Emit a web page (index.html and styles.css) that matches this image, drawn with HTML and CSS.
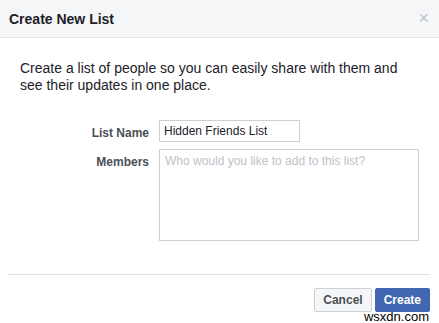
FILE: index.html
```html
<!DOCTYPE html>
<html lang="en">
<head>
  <meta charset="UTF-8">
  <title>Create New List</title>
  <link rel="stylesheet" href="styles.css">
</head>
<body>
  <div class="dialog">
    <div class="dialog-header">
      <h2>Create New List</h2>
      <span class="close">&times;</span>
    </div>

    <div class="dialog-body">
      <p class="intro">Create a list of people so you can easily share with them and see their updates in one place.</p>

      <div class="form">
        <label for="listName">List Name</label>
        <input id="listName" type="text" value="Hidden Friends List">
        <label for="members">Members</label>
        <textarea id="members" placeholder="Who would you like to add to this list?"></textarea>
      </div>
    </div>

    <div class="dialog-footer">
      <button class="btn">Cancel</button>
      <button class="btn btn-primary">Create</button>
    </div>

    <span class="watermark">wsxdn.com</span>
  </div>
</body>
</html>
```

FILE: styles.css
```css
body {
  margin: 0;
  background: #fff;
  font-family: "Liberation Sans", Arial, sans-serif;
  color: #1d2129;
}

.dialog {
  position: relative;
  width: 439px;
  height: 323px;
  box-sizing: border-box;
}

.dialog-header {
  height: 37px;
  background: #f5f6f7;
  border-bottom: 1px solid #e5e5e5;
  padding: 0 10px 0 9px;
  display: flex;
  align-items: center;
  justify-content: space-between;
}
.dialog-header h2 {
  margin: 0;
  font-size: 14px;
  font-weight: bold;
  color: #1d2129;
}
.close {
  font-size: 18px;
  line-height: 1;
  color: #bec2c9;
  margin-top: -1px;
}

.dialog-body {
  padding: 22px 20px 0 20px;
}
.intro {
  margin: 0;
  font-size: 14px;
  line-height: 17px;
  width: 380px;
}

.form {
  margin-top: 26px;
  display: grid;
  grid-template-columns: 129px 260px;
  column-gap: 10px;
  row-gap: 7px;
}
.form label {
  text-align: right;
  font-size: 12px;
  font-weight: bold;
  color: #4b4f56;
  padding-top: 6px;
}
.form input,
.form textarea {
  font-family: inherit;
  font-size: 12px;
  color: #1d2129;
  border: 1px solid #ccd0d5;
  box-sizing: border-box;
  margin: 0;
  padding: 3px 4px;
  outline: none;
}
.form input {
  width: 141px;
  height: 22px;
}
.form textarea {
  width: 260px;
  height: 92px;
  resize: none;
  padding: 4px 5px;
}
.form textarea::placeholder {
  color: #bec2c9;
}

.dialog-footer {
  margin: 33px 9px 0 8px;
  border-top: 1px solid #dddfe2;
  padding-top: 13px;
  display: flex;
  justify-content: flex-end;
  gap: 3px;
}
.btn {
  font-family: inherit;
  font-size: 12px;
  font-weight: bold;
  height: 24px;
  padding: 0 8px;
  border: 1px solid #ccd0d5;
  border-radius: 2px;
  background: #f5f6f7;
  color: #4b4f56;
  cursor: pointer;
}
.btn-primary {
  background: #4267b2;
  border-color: #4267b2;
  color: #fff;
}

.watermark {
  position: absolute;
  right: 10px;
  bottom: 1px;
  font-size: 13px;
  color: #000;
  line-height: 11px;
}
```
